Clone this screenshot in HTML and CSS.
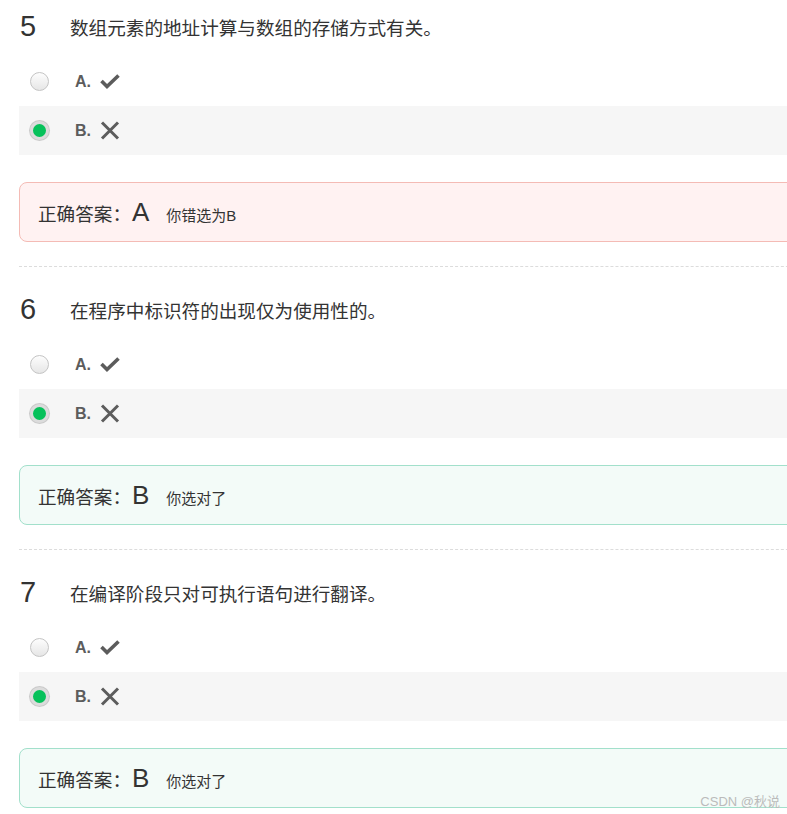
FILE: index.html
```html
<!DOCTYPE html>
<html lang="zh-CN">
<head>
    <meta charset="UTF-8">
    <title>判断题</title>
    <link rel="stylesheet" href="styles.css">
</head>
<body>
    <div class="quiz">
        <div class="question">
            <div class="q-title">
                <span class="q-num">5</span>
                <span class="q-text">数组元素的地址计算与数组的存储方式有关。</span>
            </div>
            <div class="options">
                <div class="option">
                    <span class="radio"></span>
                    <span class="opt-label">A.</span>
                    <svg class="icon" width="20" height="16" viewBox="0 0 20 16"><polyline points="1.5,7 7,12.5 18.5,1.5" fill="none" stroke="#5c5c5c" stroke-width="3.6"/></svg>
                </div>
                <div class="option chosen">
                    <span class="radio checked"></span>
                    <span class="opt-label">B.</span>
                    <svg class="icon" width="20" height="19" viewBox="0 0 20 19"><path d="M2 1.5 L18 17.5 M18 1.5 L2 17.5" fill="none" stroke="#5c5c5c" stroke-width="3"/></svg>
                </div>
            </div>
            <div class="answer wrong">
                <span class="ans-label">正确答案：</span>
                <span class="ans-key">A</span>
                <span class="ans-note">你错选为B</span>
            </div>
        </div>

        <div class="question">
            <div class="q-title">
                <span class="q-num">6</span>
                <span class="q-text">在程序中标识符的出现仅为使用性的。</span>
            </div>
            <div class="options">
                <div class="option">
                    <span class="radio"></span>
                    <span class="opt-label">A.</span>
                    <svg class="icon" width="20" height="16" viewBox="0 0 20 16"><polyline points="1.5,7 7,12.5 18.5,1.5" fill="none" stroke="#5c5c5c" stroke-width="3.6"/></svg>
                </div>
                <div class="option chosen">
                    <span class="radio checked"></span>
                    <span class="opt-label">B.</span>
                    <svg class="icon" width="20" height="19" viewBox="0 0 20 19"><path d="M2 1.5 L18 17.5 M18 1.5 L2 17.5" fill="none" stroke="#5c5c5c" stroke-width="3"/></svg>
                </div>
            </div>
            <div class="answer right">
                <span class="ans-label">正确答案：</span>
                <span class="ans-key">B</span>
                <span class="ans-note">你选对了</span>
            </div>
        </div>

        <div class="question">
            <div class="q-title">
                <span class="q-num">7</span>
                <span class="q-text">在编译阶段只对可执行语句进行翻译。</span>
            </div>
            <div class="options">
                <div class="option">
                    <span class="radio"></span>
                    <span class="opt-label">A.</span>
                    <svg class="icon" width="20" height="16" viewBox="0 0 20 16"><polyline points="1.5,7 7,12.5 18.5,1.5" fill="none" stroke="#5c5c5c" stroke-width="3.6"/></svg>
                </div>
                <div class="option chosen">
                    <span class="radio checked"></span>
                    <span class="opt-label">B.</span>
                    <svg class="icon" width="20" height="19" viewBox="0 0 20 19"><path d="M2 1.5 L18 17.5 M18 1.5 L2 17.5" fill="none" stroke="#5c5c5c" stroke-width="3"/></svg>
                </div>
            </div>
            <div class="answer right">
                <span class="ans-label">正确答案：</span>
                <span class="ans-key">B</span>
                <span class="ans-note">你选对了</span>
            </div>
        </div>
    </div>

    <div class="watermark">CSDN @秋说</div>
</body>
</html>
```

FILE: styles.css
```css
html, body {
    overflow: hidden;
}
body {
    margin: 0;
    padding-top: 10px;
    background-color: #fff;
    font-family: "Liberation Sans", "Noto Sans CJK SC", sans-serif;
    color: #333;
}
.quiz {
    width: 820px;
    margin-left: 19px;
}
.question {
    padding-bottom: 24px;
    border-bottom: 1px dashed #dcdcdc;
    margin-bottom: 26px;
}
.q-title {
    display: flex;
    align-items: center;
    height: 32px;
}
.q-num {
    width: 50px;
    padding-left: 1px;
    font-size: 29px;
    color: #333;
}
.q-text {
    font-size: 18.6px;
    color: #333;
}
.options {
    margin-top: 15px;
}
.option {
    display: flex;
    align-items: center;
    height: 49px;
}
.option.chosen {
    background-color: #f6f6f6;
}
.radio {
    box-sizing: border-box;
    width: 19px;
    height: 19px;
    margin-left: 11px;
    border-radius: 50%;
    border: 1px solid #c4c4c4;
    background: linear-gradient(#fdfdfd, #e6e6e6);
}
.radio.checked {
    border: 3px solid #dcdcdc;
    background: #06c15a;
    box-shadow: 0 0 0 1px #cacaca;
}
.opt-label {
    margin-left: 26px;
    font-size: 16px;
    font-weight: bold;
    color: #5c5c5c;
}
.icon {
    margin-left: 9px;
}
.answer {
    box-sizing: border-box;
    display: flex;
    align-items: center;
    height: 60px;
    margin-top: 27px;
    padding-left: 18px;
    border: 1px solid;
    border-radius: 8px;
}
.answer.wrong {
    background-color: #fff2f2;
    border-color: #f4bbb5;
}
.answer.right {
    background-color: #f3fbf8;
    border-color: #a2e0cb;
}
.ans-label {
    font-size: 18.6px;
    color: #333;
}
.ans-key {
    margin-left: 1px;
    font-size: 26px;
    color: #333;
}
.ans-note {
    margin-left: 17px;
    margin-top: 5px;
    font-size: 15px;
    color: #333;
}
.watermark {
    position: absolute;
    right: 7px;
    top: 791px;
    font-size: 13px;
    color: #bbb;
}
```
